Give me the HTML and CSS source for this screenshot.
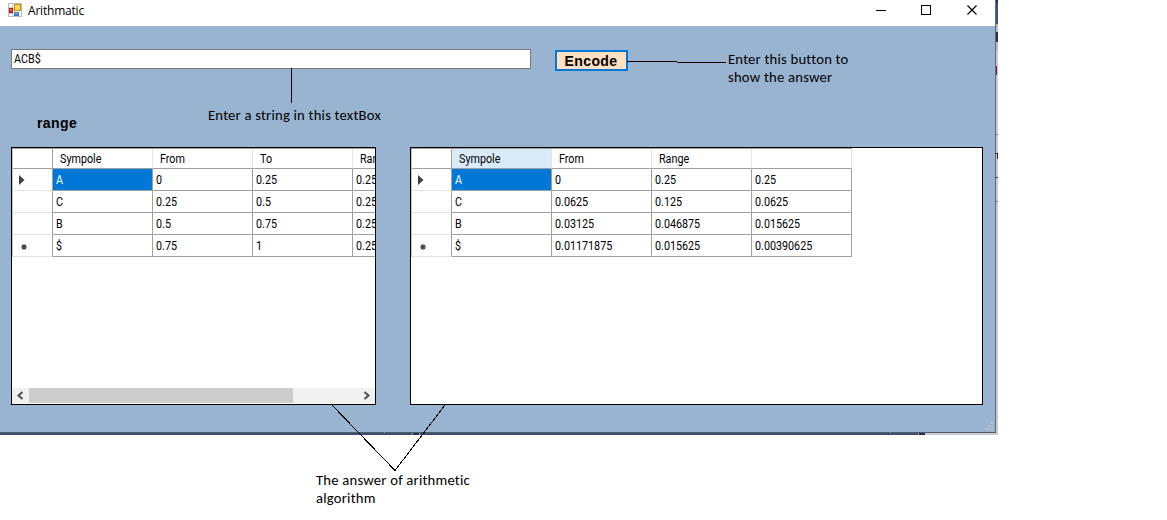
FILE: index.html
```html
<!DOCTYPE html>
<html lang="en">
<head>
<meta charset="utf-8">
<title>Arithmatic</title>
<link rel="stylesheet" href="styles.css">
</head>
<body>
<div class="desktop">
  <main class="window">
    <header class="titlebar">
      <svg class="app-icon" width="14" height="14" viewBox="0 0 14 14" shape-rendering="crispEdges">
        <rect x=".5" y=".5" width="13" height="13" fill="#fff" stroke="#bcbcbc"/>
        <path d="M4.500 1v12M1 4.500h5M1 10.500h5M9.500 9v4" stroke="#d0d0d0"/>
        <rect x="1" y="5" width="4" height="5" fill="#b51c16"/><rect x="2" y="6" width="2" height="2" fill="#e0706a"/>
        <rect x="6" y="1" width="7" height="7" fill="#c78f0c"/><rect x="7" y="2" width="5" height="5" fill="#fbd65a"/>
        <rect x="6" y="9" width="5" height="4" fill="#3e74d2"/><rect x="7" y="10" width="3" height="1" fill="#8db5f4"/>
      </svg>
      <h1 class="title">Arithmatic</h1>
      <svg class="controls" width="102" height="12" viewBox="0 0 102 12" fill="none" stroke="#000">
        <path d="M0 5.500h10M45.500 .5h9v9h-9z" shape-rendering="crispEdges"/>
        <path d="M91.500 .5l9 9m0-9l-9 9" stroke-width="1.150"/>
      </svg>
    </header>
    <section class="form">
      <div class="entry">
        <div class="textbox"><span class="sys">ACB$</span></div>
        <button class="encode">Encode</button>
      </div>
      <h2 class="range">range</h2>
      <div class="grids">
        <div class="grid grid-left">
          <div class="table">
            <div class="row head"><i></i><b><span class="sys">Sympole</span></b><b><span class="sys">From</span></b><b><span class="sys">To</span></b><b><span class="sys">Range</span></b></div>
            <div class="row"><i><svg width="6" height="10"><path d="M0 0l5.500 5L0 10z" fill="#404040"/></svg></i><b class="selected"><span class="sys">A</span></b><b><span class="sys">0</span></b><b><span class="sys">0.25</span></b><b><span class="sys">0.25</span></b></div>
            <div class="row"><i></i><b><span class="sys">C</span></b><b><span class="sys">0.25</span></b><b><span class="sys">0.5</span></b><b><span class="sys">0.25</span></b></div>
            <div class="row"><i></i><b><span class="sys">B</span></b><b><span class="sys">0.5</span></b><b><span class="sys">0.75</span></b><b><span class="sys">0.25</span></b></div>
            <div class="row"><i class="new"><svg width="6" height="6"><path d="M3 0v6M0 3h6M1 1l4 4M5 1l-4 4" stroke="#404040" stroke-width="1.100"/></svg></i><b><span class="sys">$</span></b><b><span class="sys">0.75</span></b><b><span class="sys">1</span></b><b><span class="sys">0.25</span></b></div>
          </div>
          <div class="scrollbar">
            <svg width="17" height="15" fill="none" stroke="#505050" stroke-width="2"><path d="M10.500 4L6.500 7.500l4 3.500"/></svg>
            <div class="thumb"></div>
            <svg width="17" height="15" fill="none" stroke="#505050" stroke-width="2"><path d="M6.500 4l4 3.500-4 3.500"/></svg>
          </div>
        </div>
        <div class="grid grid-right">
          <div class="table">
            <div class="row head"><i></i><b class="hot"><span class="sys">Sympole</span></b><b><span class="sys">From</span></b><b><span class="sys">Range</span></b><b></b></div>
            <div class="row"><i><svg width="6" height="10"><path d="M0 0l5.500 5L0 10z" fill="#404040"/></svg></i><b class="selected"><span class="sys">A</span></b><b><span class="sys">0</span></b><b><span class="sys">0.25</span></b><b><span class="sys">0.25</span></b></div>
            <div class="row"><i></i><b><span class="sys">C</span></b><b><span class="sys">0.0625</span></b><b><span class="sys">0.125</span></b><b><span class="sys">0.0625</span></b></div>
            <div class="row"><i></i><b><span class="sys">B</span></b><b><span class="sys">0.03125</span></b><b><span class="sys">0.046875</span></b><b><span class="sys">0.015625</span></b></div>
            <div class="row"><i class="new"><svg width="6" height="6"><path d="M3 0v6M0 3h6M1 1l4 4M5 1l-4 4" stroke="#404040" stroke-width="1.100"/></svg></i><b><span class="sys">$</span></b><b><span class="sys">0.01171875</span></b><b><span class="sys">0.015625</span></b><b><span class="sys">0.00390625</span></b></div>
          </div>
        </div>
      </div>
    </section>
  </main>
  <svg class="overlay" width="1167" height="520" shape-rendering="crispEdges">
    <g class="backdrop">
      <path fill="#cbcbcb" d="M996 0h2v435h-73v-2h71z"/>
      <path fill="#26335a" d="M996 0h2v3h-2z"/><path fill="#3f5278" d="M996 3h2v21h-2z"/>
      <path fill="#b4b9cb" d="M996 24h2v26h-2z"/><path fill="#333" d="M996 32h2v10h-2z"/>
      <path fill="#7a1850" d="M996 66h1v9h-1z"/>
      <path fill="#808080" d="M996 134h2v1h-2zM996 201h2v1h-2z"/>
      <path fill="#3a2020" d="M995 153h3v1h-3zM997 154h1v5h-1z"/><path fill="#1b4c91" d="M995 177h3v1h-3z"/>
      <path fill="#3c4f70" d="M0 433h918v2H0z"/><path fill="#23304c" d="M413 433h6v2h-6zM919 433h6v2h-6z"/>
      <path fill="#8d9bb0" d="M384 432h1v1h-1zM412 433h1v2h-1zM419 433h1v2h-1zM890 432h1v1h-1zM918 433h1v2h-1z"/>
    </g>
    <path class="grip" d="M991 422h2v2h-2zM988 425h2v2h-2zM991 425h2v2h-2zM985 428h2v2h-2zM988 428h2v2h-2zM991 428h2v2h-2z"/>
    <g fill="none" stroke="#000"><path d="M291.500 68v35M627 61.500h50M677 62.500h49"/><path d="M332 405l63 65.500 50-65.500"/></g>
  </svg>
  <p class="note note-textbox">Enter a string in this textBox</p>
  <p class="note note-button">Enter this button to<br>show the answer</p>
  <p class="note note-answer">The answer of arithmetic<br>algorithm</p>
</div>
</body>
</html>
```

FILE: styles.css
```css
* { box-sizing: border-box; }
body { margin: 0; background: #fff; overflow: hidden; }
.desktop { position: relative; width: 1167px; height: 520px; }
.window {
  width: 996px; height: 433px;
  background: #99b4d1;
  border-right: 1px solid #5f6b7b;
  border-bottom: 1px solid #505c6b;
}
.titlebar { display: flex; align-items: flex-start; height: 26px; padding: 3px 17px 0 8px; background: #fff; }
.title { margin: 0 auto 0 6px; font: 12px/16px "Open Sans", sans-serif; letter-spacing: -.2px; }
.controls { margin-top: 2px; }
.form { padding: 23px 12px 0 11px; }
.entry { display: flex; gap: 24px; }
.textbox { width: 520px; height: 20px; padding: 0 2px; border: 1px solid #7a7a7a; background: #fff; }
.sys {
  display: block; width: max-content;
  font: 12.500px/18px Roboto, sans-serif;
  transform: scaleX(.86); transform-origin: left;
}
.encode {
  width: 73px; height: 21px; margin-top: 1px; padding: 1px 1px 0 0;
  border: 2px solid #0078d7; background: #ffe0c0; color: #000;
  font: bold 14px/16px "Liberation Sans", sans-serif; letter-spacing: .4px;
}
.range { margin: 43px 0 0 26px; font: bold 14px/18px "Liberation Sans", sans-serif; letter-spacing: .4px; }
.grids { display: flex; gap: 34px; margin-top: 15px; }
.grid { display: flex; flex-direction: column; justify-content: space-between; height: 258px; border: 1px solid #000; background: #fff; overflow: hidden; }
.grid-left { width: 365px; }
.grid-right { width: 573px; }
.table { width: 441px; border-top: 1px solid #a0a0a0; border-left: 1px solid #c6c6c6; }
.row { display: grid; grid-template-columns: 40px repeat(4, 100px); height: 22px; }
.row i { display: flex; align-items: center; padding: 1px 0 0 6px; border-right: 1px solid #a0a0a0; border-bottom: 1px solid #e3e3e3; }
.row .new { padding: 3px 0 0 8px; }
.row b { padding: 2px 0 0 3px; border-right: 1px solid #a0a0a0; border-bottom: 1px solid #a0a0a0; font-weight: normal; }
.head { height: 20px; }
.head i { border-bottom-color: #a0a0a0; }
.head b { padding: 1px 0 0 7px; border-right-color: #e3e3e3; }
.head .hot { background: #d9ebf9; }
.row .selected { background: #0078d7; color: #fff; }
.scrollbar { display: flex; height: 16px; background: #f0f0f0; border-bottom: 1px solid #f7f9f2; }
.thumb { width: 264px; margin-right: auto; background: #cdcdcd; }
.overlay { position: absolute; left: 0; top: 0; }
.grip { fill: #bfbfbf; }
.note {
  position: absolute; margin: 0;
  font: 14.667px/18px Carlito, Lato, sans-serif;
  letter-spacing: .21px; font-variant-ligatures: none; white-space: nowrap;
}
.note-textbox { left: 208px; top: 106px; }
.note-button { left: 728px; top: 50px; }
.note-answer { left: 316px; top: 471px; }
```
